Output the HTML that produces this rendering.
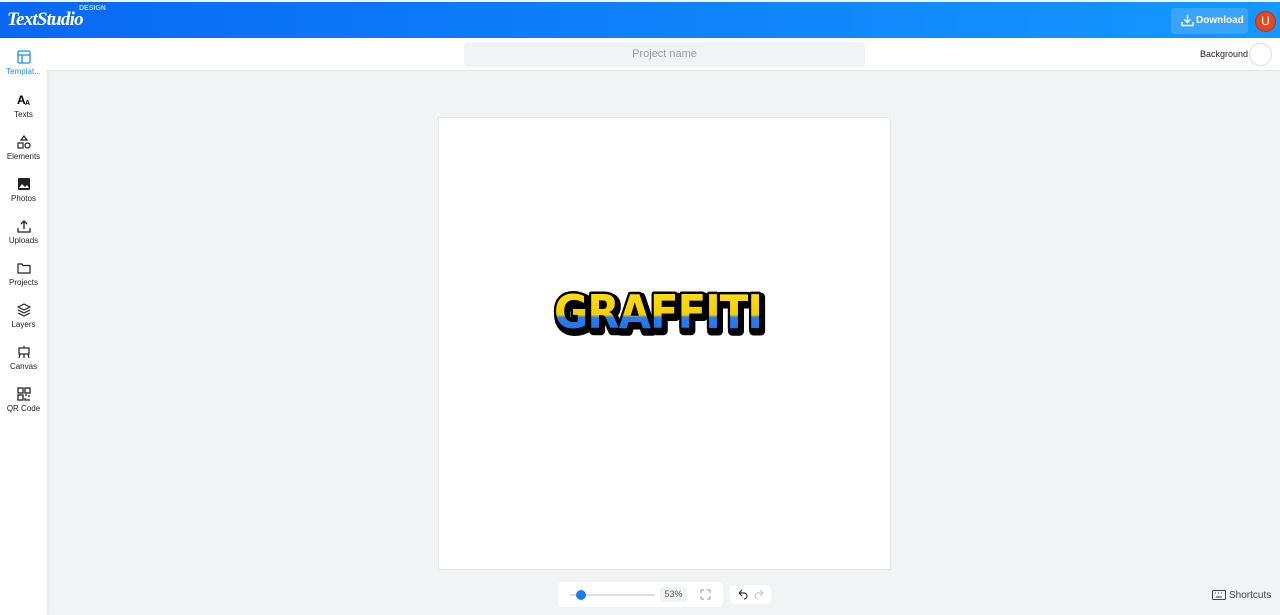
<!DOCTYPE html>
<html><head><meta charset="utf-8"><style>
*{margin:0;padding:0;box-sizing:border-box}
body{width:1280px;height:615px;overflow:hidden;font-family:"Liberation Sans",sans-serif;background:#f2f3f5;position:relative}
.hdr{position:absolute;left:0;top:2px;width:1280px;height:36px;background:linear-gradient(90deg,#0968f4,#1499ff)}
.logo{position:absolute;left:7px;top:7px;color:#fff;font:italic bold 19px "Liberation Serif",serif;letter-spacing:-0.8px}
.design{position:absolute;left:79px;top:3px;color:#c9d8ff;font-size:7px;font-weight:bold}
.dl{position:absolute;left:1171px;top:6px;width:77px;height:26px;background:#3aa3fb;border-radius:4px;color:#fff;font-size:10px;font-weight:bold;line-height:26px;padding-left:25px}
.av{position:absolute;left:1255px;top:9px;width:21px;height:21px;border-radius:50%;background:#e8461f;border:1px solid #a33;color:#fff;font-size:12px;text-align:center;line-height:19px}
.side{position:absolute;left:0;top:38px;width:47px;height:577px;background:#fff;box-shadow:1px 0 4px rgba(0,0,0,.08)}
.it{position:absolute;left:0;width:47px;text-align:center;font-size:8px;color:#222}
.it svg{display:block;margin:0 auto 3px}
.top{position:absolute;left:47px;top:38px;width:1233px;height:33px;background:#fff;border-bottom:1px solid #e3e5e8}
.pn{position:absolute;left:464px;top:42px;width:401px;height:25px;background:#f2f3f5;border-radius:4px;color:#999;font-size:11px;text-align:center;line-height:25px}
.bg{position:absolute;left:1200px;top:49px;font-size:9px;color:#222}
.bgc{position:absolute;left:1249px;top:43px;width:23px;height:23px;border-radius:50%;background:#fff;border:1px solid #ddd}
.canvas{position:absolute;left:438px;top:117px;width:453px;height:453px;background:#fff;border:1px solid #e4e4e4}
.zoom{position:absolute;left:558px;top:582px;width:165px;height:25px;background:#fff;border-radius:4px}
.undo{position:absolute;left:730px;top:585px;width:41px;height:19px;background:#fff;border-radius:4px}
.sc{position:absolute;left:1213px;top:590px;font-size:10px;color:#444}
</style></head><body>
<div class="hdr"><div class="logo">TextStudio</div><div class="design">DESIGN</div>
<div class="dl"><svg style="position:absolute;left:10px;top:6px" width="13" height="13" viewBox="0 0 13 13" fill="none" stroke="#fff" stroke-width="1.4"><path d="M6.5 1v7M3.5 5.5l3 3 3-3M1 8v3.5h11V8"/></svg>Download</div>
<div class="av">U</div></div>
<div class="side">
<div class="it" style="top:12px;color:#1a8cff"><svg width="14" height="14" viewBox="0 0 14 14" fill="none" stroke="#1a8cff" stroke-width="1.3"><rect x="1" y="1" width="12" height="12" rx="1.5"/><path d="M1 5h12M5 5v8"/></svg>Templat...</div>
<div class="it" style="top:55px"><svg width="14" height="14" viewBox="0 0 14 14"><text x="0" y="11" font-size="12" font-weight="bold" font-family="Liberation Sans">A</text><text x="8" y="12" font-size="7" font-weight="bold" font-family="Liberation Sans">A</text></svg>Texts</div>
<div class="it" style="top:97px"><svg width="14" height="14" viewBox="0 0 14 14" fill="none" stroke="#222" stroke-width="1.2"><path d="M7 1l3 4H4z"/><rect x="1" y="8" width="5" height="5"/><circle cx="10.5" cy="10.5" r="2.5"/></svg>Elements</div>
<div class="it" style="top:139px"><svg width="14" height="14" viewBox="0 0 14 14"><rect x="1" y="1" width="12" height="12" rx="1" fill="#222"/><path d="M2 11l3-4 3 3 2-2 2 3z" fill="#fff"/></svg>Photos</div>
<div class="it" style="top:181px"><svg width="14" height="14" viewBox="0 0 14 14" fill="none" stroke="#222" stroke-width="1.3"><path d="M7 10V2M4 5l3-3 3 3M1 9v4h12V9"/></svg>Uploads</div>
<div class="it" style="top:223px"><svg width="14" height="14" viewBox="0 0 14 14" fill="none" stroke="#222" stroke-width="1.2"><path d="M1 3h4l1 1.5h7V12H1z"/></svg>Projects</div>
<div class="it" style="top:265px"><svg width="14" height="14" viewBox="0 0 14 14" fill="none" stroke="#222" stroke-width="1.2"><path d="M7 1l6 3-6 3-6-3z M1 7l6 3 6-3M1 10l6 3 6-3"/></svg>Layers</div>
<div class="it" style="top:307px"><svg width="14" height="14" viewBox="0 0 14 14" fill="none" stroke="#222" stroke-width="1.2"><rect x="2" y="3" width="10" height="6"/><path d="M7 1v2M3 9l-1 4M11 9l1 4M7 9v4"/></svg>Canvas</div>
<div class="it" style="top:349px"><svg width="14" height="14" viewBox="0 0 14 14" fill="none" stroke="#222" stroke-width="1.3"><rect x="1" y="1" width="5" height="5"/><rect x="8" y="1" width="5" height="5"/><rect x="1" y="8" width="5" height="5"/><path d="M8 8h2M12 8v2M8 11v2h5"/></svg>QR Code</div>
</div>
<div class="top"></div>
<div class="pn">Project name</div>
<div class="bg">Background</div><div class="bgc"></div>
<div class="canvas"></div>
<svg style="position:absolute;left:543px;top:275px" width="230" height="65" viewBox="0 0 230 65">
<defs><linearGradient id="g" x1="0" y1="0" x2="0" y2="1"><stop offset="0" stop-color="#ffe020"/><stop offset=".55" stop-color="#f5d000"/><stop offset=".6" stop-color="#2a7df0"/><stop offset="1" stop-color="#1e6ee8"/></linearGradient></defs>
<text x="115" y="53" text-anchor="middle" font-family="DejaVu Sans" font-weight="bold" font-size="46" letter-spacing="-1" stroke="#000" stroke-width="9" stroke-linejoin="round" fill="#000" textLength="208" lengthAdjust="spacingAndGlyphs" transform="translate(2,3)">GRAFFITI</text>
<text x="115" y="53" text-anchor="middle" font-family="DejaVu Sans" font-weight="bold" font-size="46" letter-spacing="-1" stroke="#000" stroke-width="5" stroke-linejoin="round" fill="url(#g)" paint-order="stroke" textLength="208" lengthAdjust="spacingAndGlyphs">GRAFFITI</text>
</svg>
<div class="zoom">
<div style="position:absolute;left:12px;top:12px;width:85px;height:2px;background:#ddd"></div>
<div style="position:absolute;left:18px;top:8px;width:10px;height:10px;border-radius:50%;background:#1a7cf5"></div>
<div style="position:absolute;left:102px;top:5px;width:27px;height:15px;background:#f2f3f5;border-radius:3px;font-size:9px;color:#555;text-align:center;line-height:15px">53%</div>
<svg style="position:absolute;left:142px;top:7px" width="11" height="11" viewBox="0 0 11 11" fill="none" stroke="#999" stroke-width="1"><path d="M1 4V1h3M7 1h3v3M10 7v3H7M4 10H1V7"/></svg>
</div>
<div class="undo"><svg style="position:absolute;left:6px;top:4px" width="30" height="11" viewBox="0 0 30 11" fill="none" stroke-width="1.2"><path d="M3 4h5a3 3 0 0 1 0 6M3 4l3-3M3 4l3 3" stroke="#333"/><path d="M27 4h-5a3 3 0 0 0 0 6M27 4l-3-3M27 4l-3 3" stroke="#ccc"/></svg></div>
<svg style="position:absolute;left:1212px;top:590px" width="14" height="10" viewBox="0 0 14 10" fill="none" stroke="#444"><rect x=".5" y=".5" width="13" height="9" rx="1"/><path d="M3 3h1M6 3h1M9 3h1M4 7h6"/></svg>
<div class="sc" style="left:1229px">Shortcuts</div>
</body></html>
